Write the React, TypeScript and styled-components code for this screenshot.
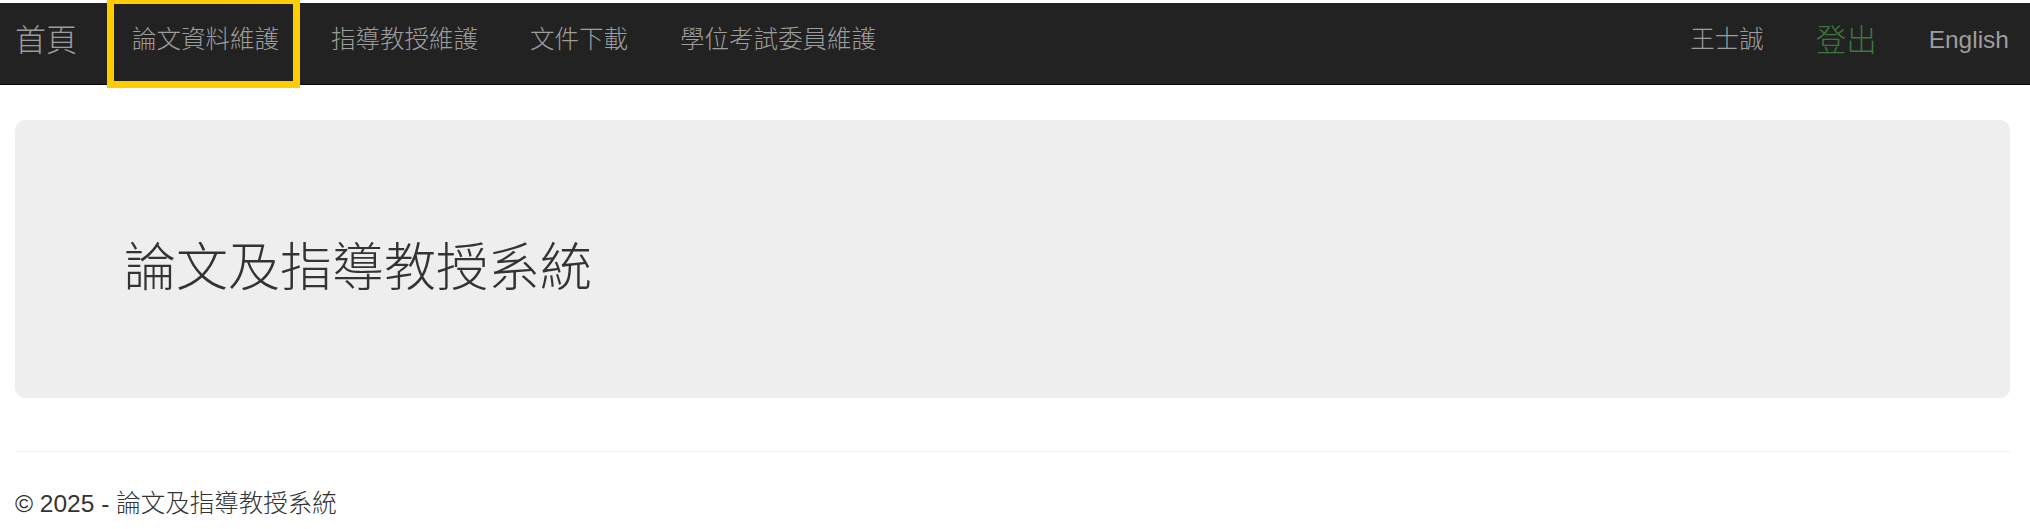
import React from "react";
import styled, { createGlobalStyle } from "styled-components";

const GlobalStyle = createGlobalStyle`
  html, body {
    margin: 0;
    padding: 0;
    background: #ffffff;
  }
  body {
    font-family: "Liberation Sans", "Noto Sans CJK TC", "Noto Sans", sans-serif;
    color: #333333;
  }
  * { box-sizing: border-box; }
`;

const Page = styled.div`
  padding-top: 3px;
  width: 2030px;
`;

const Navbar = styled.nav`
  display: flex;
  align-items: center;
  height: 82px;
  background: #222222;
  border-bottom: 1px solid #080808;
  padding: 0 21px 6px 0;
`;

const Brand = styled.a`
  font-size: 31px;
  line-height: 1;
  color: #9d9d9d;
  padding: 0 29px 0 15px;
  font-weight: 300;
  text-decoration: none;
  white-space: nowrap;
`;

const NavList = styled.div`
  display: flex;
  align-items: center;
  margin-left: ${(p: { $right?: boolean }) => (p.$right ? "auto" : "0")};
`;

const NavLink = styled.a<{ $active?: boolean; $tone?: "success"; $big?: boolean }>`
  position: relative;
  display: block;
  font-size: ${(p) => (p.$big ? "30.5px" : "24.5px")};
  line-height: 1;
  font-weight: 300;
  padding: 0 26px;
  color: ${(p) => (p.$tone === "success" ? "#3c763d" : "#9d9d9d")};
  text-decoration: none;
  white-space: nowrap;

  &:last-child {
    padding-right: 0;
  }

  ${(p) =>
    p.$active
      ? `
    &::after {
      content: "";
      position: absolute;
      left: 1px;
      right: 5px;
      top: -31px;
      bottom: -35px;
      border: 7px solid #ffcc00;
      pointer-events: none;
    }
  `
      : ""}
`;

const Main = styled.main`
  padding: 35px 20px 0 15px;
`;

const Jumbotron = styled.section`
  background: #eeeeee;
  border-radius: 10px;
  height: 278px;
  padding: 119px 0 0 109px;
`;

const Title = styled.h1`
  margin: 0;
  font-size: 52px;
  line-height: 58px;
  font-weight: 300;
  color: #333333;
`;

const Rule = styled.hr`
  margin: 53px 0 0 0;
  border: 0;
  border-top: 1px solid #eeeeee;
  height: 0;
`;

const Footer = styled.footer`
  padding-top: 34px;
  font-size: 24.5px;
  line-height: 35px;
  font-weight: 300;
  color: #333333;
`;

export default function App() {
  return (
    <>
      <GlobalStyle />
      <Page>
        <Navbar>
          <Brand href="#">首頁</Brand>
          <NavList>
            <NavLink href="#" $active>
              論文資料維護
            </NavLink>
            <NavLink href="#">指導教授維護</NavLink>
            <NavLink href="#">文件下載</NavLink>
            <NavLink href="#">學位考試委員維護</NavLink>
          </NavList>
          <NavList $right>
            <NavLink href="#">王士誠</NavLink>
            <NavLink href="#" $tone="success" $big>
              登出
            </NavLink>
            <NavLink href="#">English</NavLink>
          </NavList>
        </Navbar>
        <Main>
          <Jumbotron>
            <Title>論文及指導教授系統</Title>
          </Jumbotron>
          <Rule />
          <Footer>© 2025 - 論文及指導教授系統</Footer>
        </Main>
      </Page>
    </>
  );
}
